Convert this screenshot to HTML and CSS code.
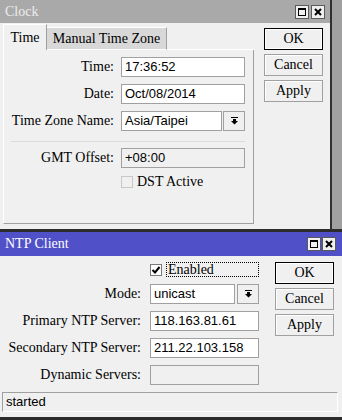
FILE: index.html
```html
<!DOCTYPE html>
<html lang="en">
<head>
  <meta charset="UTF-8" />
  <title>Clock / NTP Client</title>
  <link rel="stylesheet" href="styles.css">
</head>
<body>

  <!-- Clock window (inactive) -->
  <div class="win clock">
    <div class="titlebar inactive">
      <span class="title">Clock</span>
      <div class="tb-btns">
        <span class="tb-btn">
          <svg width="12" height="12" viewBox="0 0 12 12"><rect x="2.5" y="2.5" width="7" height="7" fill="none" stroke="#000"/><rect x="2" y="2" width="8" height="2" fill="#000"/></svg>
        </span>
        <span class="tb-btn">
          <svg width="12" height="12" viewBox="0 0 12 12"><path d="M3 3l6 6M9 3l-6 6" stroke="#000" stroke-width="2"/></svg>
        </span>
      </div>
    </div>
    <div class="win-body">
      <div class="main">
        <div class="tabs">
          <div class="tab active">Time</div>
          <div class="tab">Manual Time Zone</div>
          <div class="tab-fill"></div>
        </div>
        <div class="panel">
          <div class="form clock-form">
            <label>Time:</label>
            <div class="field">17:36:52</div>

            <label>Date:</label>
            <div class="field">Oct/08/2014</div>

            <label>Time Zone Name:</label>
            <div class="combo">
              <div class="field">Asia/Taipei</div>
              <span class="drop">
                <svg width="7" height="8" viewBox="0 0 7 8"><rect x="0" y="0" width="7" height="1" fill="#000"/><path d="M2 2h3v2h2l-3.5 3.5L0 4h2z" fill="#000"/></svg>
              </span>
            </div>

            <div class="sep"></div>

            <label>GMT Offset:</label>
            <div class="field disabled">+08:00</div>

            <span></span>
            <div class="check-row">
              <span class="box disabled"></span>
              <span>DST Active</span>
            </div>
          </div>
        </div>
      </div>
      <div class="buttons">
        <button class="btn default">OK</button>
        <button class="btn">Cancel</button>
        <button class="btn">Apply</button>
      </div>
    </div>
  </div>

  <!-- NTP Client window (active) -->
  <div class="win ntp">
    <div class="titlebar active">
      <span class="title">NTP Client</span>
      <div class="tb-btns">
        <span class="tb-btn">
          <svg width="12" height="12" viewBox="0 0 12 12"><rect x="2.5" y="2.5" width="7" height="7" fill="none" stroke="#000"/><rect x="2" y="2" width="8" height="2" fill="#000"/></svg>
        </span>
        <span class="tb-btn">
          <svg width="12" height="12" viewBox="0 0 12 12"><path d="M3 3l6 6M9 3l-6 6" stroke="#000" stroke-width="2"/></svg>
        </span>
      </div>
    </div>
    <div class="win-body ntp-body">
      <div class="form ntp-form">
        <span></span>
        <div class="check-row enabled-row">
          <span class="box">
            <svg width="10" height="10" viewBox="0 0 10 10"><path d="M1.5 5l2.5 2.5 4.5-5.5" fill="none" stroke="#000" stroke-width="2"/></svg>
          </span>
          <span class="focus">Enabled</span>
        </div>

        <label>Mode:</label>
        <div class="combo">
          <div class="field">unicast</div>
          <span class="drop">
            <svg width="7" height="8" viewBox="0 0 7 8"><rect x="0" y="0" width="7" height="1" fill="#000"/><path d="M2 2h3v2h2l-3.5 3.5L0 4h2z" fill="#000"/></svg>
          </span>
        </div>

        <label>Primary NTP Server:</label>
        <div class="field">118.163.81.61</div>

        <label>Secondary NTP Server:</label>
        <div class="field">211.22.103.158</div>

        <label>Dynamic Servers:</label>
        <div class="field disabled"></div>
      </div>
      <div class="buttons ntp-buttons">
        <button class="btn default">OK</button>
        <button class="btn">Cancel</button>
        <button class="btn">Apply</button>
      </div>
    </div>
    <div class="status">started</div>
  </div>

</body>
</html>
```

FILE: styles.css
```css
body {
  margin: 0;
  width: 342px;
  height: 420px;
  overflow: hidden;
  background: #a0a0a0;
  font-family: "Liberation Serif", serif;
  font-size: 14px;
  color: #000;
}

.win {
  background: #f0f0f0;
  box-sizing: border-box;
}

.clock {
  width: 332px;
  height: 229px;
  border-right: 2px solid #303030;
}

.ntp {
  width: 344px;
  height: 191px;
  border-top: 3px solid #2c2c2c;
  border-bottom: 3px solid #2c2c2c;
}

/* Title bars */
.titlebar {
  display: flex;
  align-items: center;
  justify-content: space-between;
  padding: 0 5px 0 5px;
}

.titlebar.inactive {
  height: 23px;
  background: #a9a9a9;
  color: #ececec;
}

.titlebar.active {
  height: 24px;
  background: #5050c8;
  color: #fff;
  padding-right: 8px;
}

.title {
  font-size: 14px;
}

.tb-btns {
  display: flex;
  gap: 2px;
}

.ntp .tb-btns {
  gap: 1px;
}

.tb-btn {
  width: 14px;
  height: 14px;
  box-sizing: border-box;
  border: 1px solid #5a5a5a;
  background: #f0f0f0;
  display: flex;
  align-items: center;
  justify-content: center;
}

/* Window body */
.win-body {
  display: flex;
  padding: 1px 0 0 3px;
}

.main {
  width: 251px;
}

.tabs {
  display: flex;
  height: 26px;
}

.tab {
  box-sizing: border-box;
  display: flex;
  align-items: center;
  justify-content: center;
  border-top: 1px solid #fff;
  border-right: 1px solid #a0a0a0;
}

.tab.active {
  width: 44px;
  height: 26px;
  border-left: 1px solid #fff;
}

.tab:not(.active) {
  width: 120px;
  height: 23px;
  margin-top: 3px;
  background: #d8d8d8;
  border-bottom: 1px solid #fff;
  padding-top: 1px;
}

.tab-fill {
  flex: 1;
  border-bottom: 1px solid #fff;
}

.panel {
  box-sizing: border-box;
  height: 174px;
  border-left: 1px solid #fff;
  border-right: 1px solid #a0a0a0;
  border-bottom: 1px solid #a0a0a0;
  padding-top: 7px;
}

/* Forms */
.form {
  display: grid;
  grid-auto-rows: 20px;
  row-gap: 7px;
  align-items: center;
}

.clock-form {
  grid-template-columns: 110px 124px;
  grid-auto-rows: auto;
  column-gap: 7px;
}

.ntp-form {
  grid-template-columns: 141px 109px;
  column-gap: 9px;
}

.form label {
  text-align: right;
  white-space: nowrap;
}

.field {
  box-sizing: border-box;
  height: 20px;
  border: 1px solid #a0a0a0;
  background: #fff;
  font-family: "Liberation Sans", sans-serif;
  font-size: 13px;
  line-height: 18px;
  padding-left: 3px;
  white-space: nowrap;
  overflow: hidden;
}

.field.disabled {
  background: #f0f0f0;
}

.combo {
  display: flex;
  gap: 1px;
}

.combo .field {
  flex: 1;
}

.drop {
  box-sizing: border-box;
  width: 22px;
  height: 20px;
  border: 1px solid #a0a0a0;
  background: #f0f0f0;
  display: flex;
  align-items: center;
  justify-content: center;
}

.ntp-form .combo {
  gap: 2px;
}

.sep {
  grid-column: 1 / -1;
  height: 1px;
  margin: 3px 0 -1px 7px;
  background: #dcdcdc;
}

.check-row {
  display: flex;
  align-items: center;
  gap: 4px;
  height: 14px;
}

.box {
  box-sizing: border-box;
  width: 12px;
  height: 12px;
  border: 1px solid #7a7a7a;
  background: #fff;
  display: flex;
  align-items: center;
  justify-content: center;
}

.box.disabled {
  border-color: #c8c8c8;
  background: #f0f0f0;
}

.enabled-row {
  align-self: end;
  height: 15px;
}

.focus {
  box-sizing: border-box;
  width: 94px;
  height: 15px;
  line-height: 13px;
  border: 1px dotted #000;
  padding-left: 1px;
}

/* Buttons */
.buttons {
  display: flex;
  flex-direction: column;
  gap: 4px;
  margin-top: 4px;
  margin-left: 10px;
}

.ntp-body {
  padding-left: 0;
  height: 135px;
}

.ntp-buttons {
  margin-top: 5px;
  margin-left: 16px;
}

.btn {
  width: 59px;
  height: 22px;
  box-sizing: border-box;
  font-family: "Liberation Serif", serif;
  font-size: 14px;
  background: #f0f0f0;
  border: 1px solid #a0a0a0;
  box-shadow: inset 1px 1px 0 #fff;
  padding: 0;
}

.btn.default {
  border: 1px solid #000;
  box-shadow: inset 0 0 0 1px #fff;
}

/* Status bar */
.status {
  box-sizing: border-box;
  height: 20px;
  margin: 0 6px 0 2px;
  border-top: 1px solid #a0a0a0;
  border-left: 1px solid #a0a0a0;
  border-bottom: 1px solid #fff;
  border-right: 1px solid #fff;
  font-family: "Liberation Sans", sans-serif;
  font-size: 13px;
  line-height: 18px;
  padding-left: 3px;
}
```
